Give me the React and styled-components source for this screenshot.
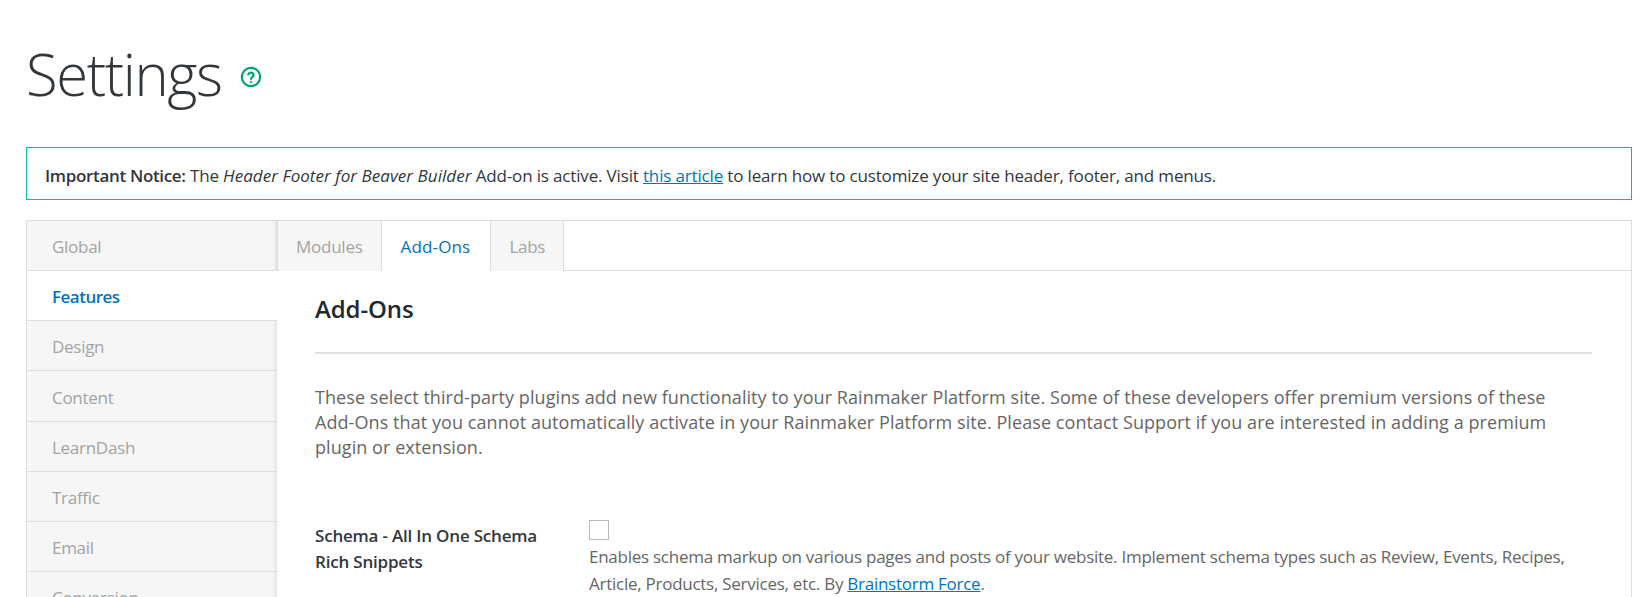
import React from 'react';
import styled, { createGlobalStyle } from 'styled-components';

const GlobalStyle = createGlobalStyle`
  html, body {
    margin: 0;
    padding: 0;
    height: 597px;
    overflow: hidden;
    background: #fff;
  }
  body {
    font-family: 'Open Sans', 'Noto Sans', sans-serif;
    color: #333;
  }
`;

const Page = styled.div`
  padding: 36px 18px 0 26px;
`;

const Header = styled.div`
  display: flex;
  align-items: center;
  gap: 18px;
  height: 76px;
  margin-bottom: 35px;
`;

const Title = styled.h1`
  margin: 0;
  font-size: 58px;
  font-weight: 300;
  line-height: 76px;
  letter-spacing: -1.4px;
  color: #32373c;
`;

const HelpIcon = styled.svg`
  width: 22px;
  height: 22px;
  margin-top: 6px;
  color: #00a076;
`;

const Notice = styled.div`
  box-sizing: border-box;
  height: 53px;
  display: flex;
  align-items: center;
  padding: 3px 18px 0;
  border: 1px solid #00c19a;
  font-size: 17px;
  letter-spacing: -0.16px;
  color: #32373c;
  margin-bottom: 20px;
  white-space: pre;
`;

const NoticeLead = styled.strong`
  font-weight: 600;
  letter-spacing: -0.33px;
`;

const NoticeName = styled.em`
  letter-spacing: 0.05px;
`;

const TextLink = styled.a`
  color: #0073bd;
  text-decoration: underline;
`;

const Panel = styled.div`
  display: grid;
  grid-template-columns: 250px 1fr;
  border: 1px solid #ddd;
  border-bottom: 0;
  height: 400px;
  overflow: hidden;
`;

const Sidebar = styled.ul`
  list-style: none;
  margin: 0;
  padding: 0;
  background: #f6f6f6;
`;

const SideItem = styled.li`
  box-sizing: border-box;
  height: 50px;
  padding: 2px 0 0 25px;
  display: flex;
  align-items: center;
  font-size: 17px;
  letter-spacing: ${p => (p.$active ? '-0.5px' : '-0.28px')};
  border-bottom: 1px solid #ddd;
  color: ${p => (p.$active ? '#0073bd' : '#a3a3a3')};
  font-weight: ${p => (p.$active ? 600 : 400)};
  background: ${p => (p.$active ? '#fff' : 'transparent')};
  box-shadow: ${p => (p.$active ? 'none' : 'inset -6px 0 5px -6px rgba(0, 0, 0, 0.18)')};

  &:nth-child(4) {
    height: 51px;
  }
`;

const Main = styled.div`
  min-width: 0;
`;

const Tabs = styled.div`
  display: flex;
  height: 50px;
  box-sizing: border-box;
  border-bottom: 1px solid #ddd;
`;

const Tab = styled.div`
  box-sizing: content-box;
  height: 49px;
  padding: ${p => (p.$active ? '1px 20px 0 19px' : '1px 18px 0')};
  margin-bottom: ${p => (p.$active ? '-1px' : '0')};
  display: flex;
  align-items: center;
  font-size: 17px;
  letter-spacing: ${p => (p.$active ? '0.15px' : '-0.25px')};
  border-right: 1px solid #ddd;
  border-left: ${p => (p.$first ? '1px solid #ddd' : '0')};
  color: ${p => (p.$active ? '#0073bd' : '#a3a3a3')};
  background: ${p => (p.$active ? '#fff' : '#f6f6f6')};
`;

const Content = styled.div`
  padding: 0 39px 0 38px;
`;

const SectionTitle = styled.h2`
  margin: 0;
  padding: 22px 0 0;
  height: 63px;
  box-sizing: border-box;
  font-size: 24px;
  font-weight: 600;
  line-height: 32px;
  letter-spacing: -0.1px;
  color: #23282d;
`;

const Divider = styled.hr`
  margin: 18px 0 31px;
  border: 0;
  border-top: 2px solid #e2e2e2;
`;

const Intro = styled.p`
  margin: 0 0 59px;
  font-size: 18px;
  line-height: 25.2px;
  letter-spacing: 0.07px;
  color: #666;
`;

const NoBreak = styled.span`
  white-space: nowrap;
`;

const Row = styled.div`
  display: grid;
  grid-template-columns: 274px 1fr;
`;

const RowLabel = styled.div`
  max-width: 240px;
  font-size: 17px;
  font-weight: 600;
  line-height: 26px;
  letter-spacing: -0.2px;
  color: #32373c;
  padding-top: 3px;
`;

const Checkbox = styled.span`
  display: block;
  box-sizing: border-box;
  width: 20px;
  height: 20px;
  border: 1px solid #bbb;
  background: #fff;
  margin-bottom: 3px;
`;

const Description = styled.p`
  margin: 0;
  font-size: 17px;
  line-height: 27px;
  letter-spacing: -0.26px;
  color: #666;
`;

const sideItems = ['Global', 'Features', 'Design', 'Content', 'LearnDash', 'Traffic', 'Email', 'Conversion'];

export default function App() {
  return (
    <Page>
      <GlobalStyle />
      <Header>
        <Title>Settings</Title>
        <HelpIcon viewBox="0 0 24 24" fill="none" stroke="currentColor" strokeWidth="2.4" strokeLinecap="round" strokeLinejoin="round">
          <circle cx="12" cy="12" r="10" />
          <path d="M9 9.2a3 3 0 0 1 5.8 1c0 2-2.8 2.4-2.8 4" />
          <path d="M12 17.6h.01" />
        </HelpIcon>
      </Header>
      <Notice>
        <span>
          <NoticeLead>Important Notice:</NoticeLead> The <NoticeName>Header Footer for Beaver Builder</NoticeName> Add-on is active. Visit <TextLink href="#">this article</TextLink> to learn how to customize your site header, footer, and menus.
        </span>
      </Notice>
      <Panel>
        <Sidebar>
          {sideItems.map(item => (
            <SideItem key={item} $active={item === 'Features'}>{item}</SideItem>
          ))}
        </Sidebar>
        <Main>
          <Tabs>
            <Tab $first>Modules</Tab>
            <Tab $active>Add-Ons</Tab>
            <Tab>Labs</Tab>
          </Tabs>
          <Content>
            <SectionTitle>Add-Ons</SectionTitle>
            <Divider />
            <Intro>
              These select third-party plugins add new functionality to your Rainmaker Platform site. Some of these developers offer premium versions of these <NoBreak>Add-Ons</NoBreak> that you cannot automatically activate in your Rainmaker Platform site. Please contact Support if you are interested in adding a premium plugin or extension.
            </Intro>
            <Row>
              <RowLabel>Schema - All In One Schema Rich Snippets</RowLabel>
              <div>
                <Checkbox />
                <Description>
                  Enables schema markup on various pages and posts of your website. Implement schema types such as Review, Events, Recipes, Article, Products, Services, etc. By <TextLink href="#">Brainstorm Force</TextLink>.
                </Description>
              </div>
            </Row>
          </Content>
        </Main>
      </Panel>
    </Page>
  );
}
